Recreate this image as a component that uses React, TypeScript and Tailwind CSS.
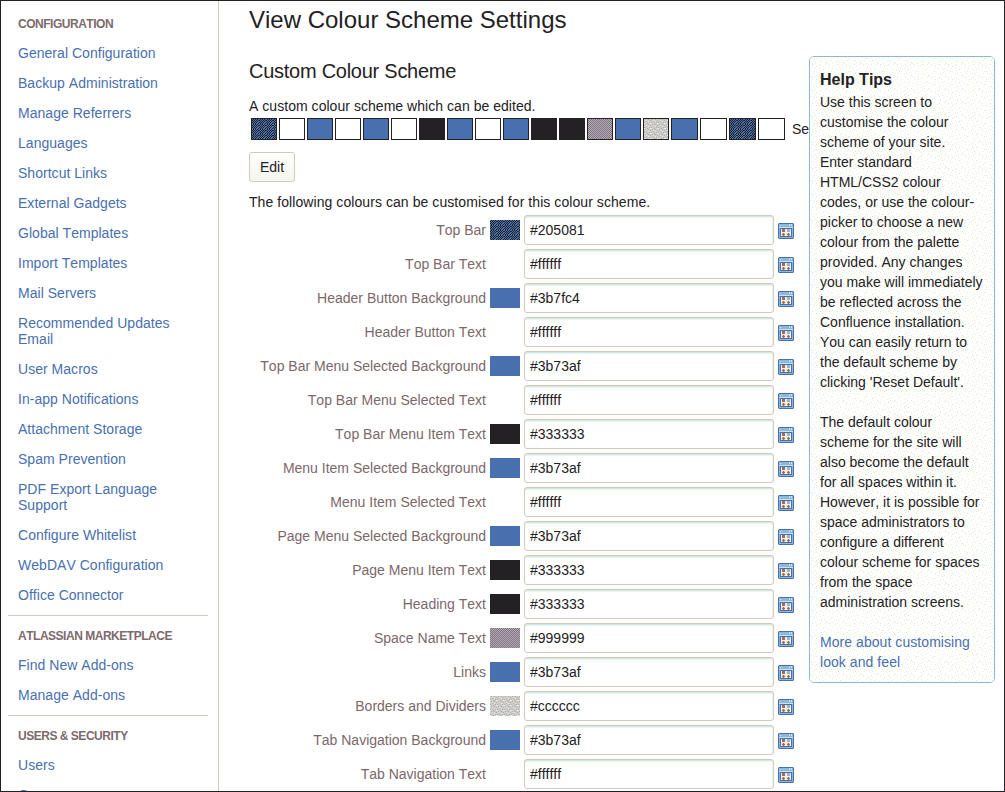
import React from "react";

type Tone = "navy" | "white" | "blue" | "black" | "grey" | "beige";

const configuration = [
  "General Configuration",
  "Backup Administration",
  "Manage Referrers",
  "Languages",
  "Shortcut Links",
  "External Gadgets",
  "Global Templates",
  "Import Templates",
  "Mail Servers",
  "Recommended Updates Email",
  "User Macros",
  "In-app Notifications",
  "Attachment Storage",
  "Spam Prevention",
  "PDF Export Language Support",
  "Configure Whitelist",
  "WebDAV Configuration",
  "Office Connector",
];

const preview: Tone[] = [
  "navy", "white", "blue", "white", "blue", "white", "black", "blue", "white", "blue",
  "black", "black", "grey", "blue", "beige", "blue", "white", "navy", "white",
];

const colours: [string, string, Tone][] = [
  ["Top Bar", "#205081", "navy"],
  ["Top Bar Text", "#ffffff", "white"],
  ["Header Button Background", "#3b7fc4", "blue"],
  ["Header Button Text", "#ffffff", "white"],
  ["Top Bar Menu Selected Background", "#3b73af", "blue"],
  ["Top Bar Menu Selected Text", "#ffffff", "white"],
  ["Top Bar Menu Item Text", "#333333", "black"],
  ["Menu Item Selected Background", "#3b73af", "blue"],
  ["Menu Item Selected Text", "#ffffff", "white"],
  ["Page Menu Selected Background", "#3b73af", "blue"],
  ["Page Menu Item Text", "#333333", "black"],
  ["Heading Text", "#333333", "black"],
  ["Space Name Text", "#999999", "grey"],
  ["Links", "#3b73af", "blue"],
  ["Borders and Dividers", "#cccccc", "beige"],
  ["Tab Navigation Background", "#3b73af", "blue"],
  ["Tab Navigation Text", "#ffffff", "white"],
];

function PatternDefs() {
  return (
    <svg className="absolute h-0 w-0" shapeRendering="crispEdges" aria-hidden="true">
      <defs>
        <pattern id="fill-navy" width="7" height="5" patternUnits="userSpaceOnUse">
          <rect width="7" height="5" fill="#4970ae" />
          <path
            d="M1 0h1v1H1zM3 0h1v1H3zM5 0h1v1H5zM0 1h1v1H0zM2 1h1v1H2zM4 1h1v1H4zM6 1h1v1H6zM1 2h1v1H1zM3 2h1v1H3zM5 2h1v1H5zM0 3h1v1H0zM2 3h1v1H2zM4 3h1v1H4zM1 4h1v1H1zM3 4h1v1H3zM6 4h1v1H6z"
            fill="#242124"
          />
        </pattern>
        <pattern id="fill-grey" width="2" height="2" patternUnits="userSpaceOnUse">
          <rect width="2" height="2" fill="#8eb6d9" />
          <path d="M1 0h1v1H1zM0 1h1v1H0z" fill="#a4685c" />
        </pattern>
        <pattern id="fill-beige" width="7" height="5" patternUnits="userSpaceOnUse">
          <rect width="7" height="5" fill="#d8cabc" />
          <path d="M1 0h1v1H1zM4 0h1v1H4zM6 1h1v1H6zM2 2h1v1H2zM5 3h1v1H5zM0 3h1v1H0zM3 4h1v1H3z" fill="#8eb6d9" />
          <path d="M2 1h1v1H2zM4 2h1v1H4zM0 4h1v1H0zM6 4h1v1H6z" fill="#e9ece2" />
        </pattern>
        <pattern id="fill-tips" width="17" height="13" patternUnits="userSpaceOnUse">
          <rect width="17" height="13" fill="#fffffd" />
          <path
            d="M1 0h1v1H1zM6 1h1v1H6zM10 0h1v1h-1zM14 2h1v1h-1zM3 3h1v1H3zM9 4h1v1H9zM12 5h1v1h-1zM0 6h1v1H0zM5 6h1v1H5zM15 7h1v1h-1zM8 8h1v1H8zM2 9h1v1H2zM12 9h1v1h-1zM5 11h1v1H5zM9 11h1v1H9zM15 11h1v1h-1z"
            fill="#f5efd8"
          />
          <path d="M4 1h1v1H4zM11 3h1v1h-1zM2 7h1v1H2zM10 7h1v1h-1zM16 5h1v1h-1zM13 12h1v1h-1zM6 9h1v1H6z" fill="#cbeaf6" />
        </pattern>
      </defs>
    </svg>
  );
}

const fills: Record<Tone, string> = {
  navy: "url(#fill-navy)",
  white: "#ffffff",
  blue: "#4970ae",
  black: "#242124",
  grey: "url(#fill-grey)",
  beige: "url(#fill-beige)",
};

function Swatch({ tone, className }: { tone: Tone; className: string }) {
  return (
    <svg className={className} shapeRendering="crispEdges">
      <rect width="100%" height="100%" fill={fills[tone]} />
    </svg>
  );
}

function NavSection({ title, items }: { title: string; items: string[] }) {
  return (
    <section className="px-[10px]">
      <h2 className="pt-2 pb-[6px] text-[12px] leading-4 font-bold tracking-[-0.48px] whitespace-nowrap text-[#7d6a6c]">{title}</h2>
      <ul>
        {items.map((item) => (
          <li key={item} className="py-[7px] pr-5 leading-4 tracking-[0.03px] text-[#4970ae]">
            <a>{item}</a>
          </li>
        ))}
      </ul>
    </section>
  );
}

function PickerIcon() {
  return (
    <svg width="16" height="16" viewBox="0 0 16 16" shapeRendering="crispEdges" className="block shrink-0">
      <rect width="16" height="16" fill="#4970ae" />
      <path d="M0 0h1v1H0zM15 0h1v1h-1zM0 15h1v1H0zM15 15h1v1h-1z" fill="#a9c3de" />
      <rect x="1" y="1" width="14" height="3" fill="#8eb6d9" />
      <path d="M2 2h1v1H2zM11 1h1v2h-1zM13 1h1v2h-1zM1 4h14v1H1z" fill="#c5e5f2" />
      <path d="M1 5h1v9H1zM14 5h1v9h-1zM1 14h14v1H1z" fill="#8eb6d9" />
      <rect x="3" y="6" width="10" height="7" fill="#f4f1df" />
      <path d="M4 6h3v3H4zM4 11h3v1H4zM5 10h1v3H5zM9 11h3v1H9zM10 10h1v3h-1z" fill="#a4685c" />
      <path d="M4 10h1v1H4zM6 10h1v1H6zM4 12h1v1H4zM6 12h1v1H6zM9 10h1v1H9zM11 10h1v1h-1zM9 12h1v1H9zM11 12h1v1h-1z" fill="#d6c8ba" />
      <path d="M9 6h3v3H9z" fill="#8eb6d9" />
    </svg>
  );
}

function ColourRow({ label, value, tone }: { label: string; value: string; tone: Tone }) {
  return (
    <div className="flex h-[30px] items-center">
      <label className="w-[237px] text-right whitespace-nowrap text-[#7b686b]">{label}</label>
      <Swatch tone={tone} className="ml-1 h-5 w-[30px]" />
      <input
        readOnly
        value={value}
        className="ml-1 h-[30px] w-[250px] rounded-[3px] border border-[#d6c8ba] bg-white px-[5px] text-[#242124] shadow-[inset_0_1px_0_#c5ebf6,inset_0_2px_0_#f5f3e2,inset_-1px_0_0_#eef6f2] outline-none"
      />
      <span className="mt-[2px] ml-1">
        <PickerIcon />
      </span>
    </div>
  );
}

export default function App() {
  return (
    <div className="relative flex h-[792px] w-[1005px] overflow-hidden border border-[#242124] bg-white font-['Liberation_Sans',Arial,sans-serif] text-[14px] text-[#242124] [font-kerning:none]">
      <PatternDefs />
      <nav className="w-[218px] shrink-0 border-r border-[#d6c8ba] pt-[7px] pr-[10px] pl-[7px]">
        <NavSection title="CONFIGURATION" items={configuration} />
        <hr className="mt-[5px] mb-1 border-[#d6c8ba]" />
        <NavSection title="ATLASSIAN MARKETPLACE" items={["Find New Add-ons", "Manage Add-ons"]} />
        <hr className="mt-[5px] mb-1 border-[#d6c8ba]" />
        <NavSection title={"USERS & SECURITY"} items={["Users", "Groups"]} />
      </nav>

      <main className="w-[590px] shrink-0 overflow-hidden pl-[30px]">
        <h1 className="mt-1 h-[30px] text-[24px] leading-[30px] whitespace-nowrap">View Colour Scheme Settings</h1>
        <h2 className="mt-6 h-6 text-[20px] leading-6 tracking-[-0.26px] whitespace-nowrap">Custom Colour Scheme</h2>
        <p className="mt-[13px] h-5 leading-5 tracking-[0.04px]">A custom colour scheme which can be edited.</p>
        <div className="mt-[2px] ml-[2px] flex h-[22px] items-center gap-[2px]">
          {preview.map((tone, i) => (
            <Swatch
              key={i}
              tone={tone}
              className={`h-[22px] shrink-0 border border-[#242124] ${i < 15 ? "w-[26px]" : "w-[27px]"}`}
            />
          ))}
          <span className="ml-[5px] whitespace-nowrap">Select</span>
        </div>
        <button className="mt-3 block h-[30px] w-[46px] rounded-[3px] border border-[#d6c8ba] bg-linear-to-b from-white to-[#f4f6ee]">
          Edit
        </button>
        <p className="mt-[10px] mb-[3px] h-5 leading-5 tracking-[0.07px]">The following colours can be customised for this colour scheme.</p>
        <div className="flex flex-col gap-1">
          {colours.map(([label, value, tone]) => (
            <ColourRow key={label} label={label} value={value} tone={tone} />
          ))}
        </div>
      </main>

      <aside className="relative mt-[55px] h-[627px] w-[186px] shrink-0 overflow-hidden rounded-[5px] border border-[#8eb6d9] bg-white px-[10px] pt-[13px] leading-5">
        <svg className="absolute inset-0 h-full w-full" shapeRendering="crispEdges" aria-hidden="true">
          <rect width="100%" height="100%" fill="url(#fill-tips)" />
        </svg>
        <div className="relative">
          <h3 className="mb-[2px] text-[16px] leading-5 font-bold">Help Tips</h3>
          <p className="whitespace-pre">
            {"Use this screen to\ncustomise the colour\nscheme of your site.\nEnter standard\nHTML/CSS2 colour\ncodes, or use the colour-\npicker to choose a new\ncolour from the palette\nprovided. Any changes\nyou make will immediately\nbe reflected across the\nConfluence installation.\nYou can easily return to\nthe default scheme by\nclicking 'Reset Default'."}
          </p>
          <p className="mt-5 whitespace-pre">
            {"The default colour\nscheme for the site will\nalso become the default\nfor all spaces within it.\nHowever, it is possible for\nspace administrators to\nconfigure a different\ncolour scheme for spaces\nfrom the space\nadministration screens."}
          </p>
          <a className="mt-5 block tracking-[0.06px] whitespace-pre text-[#4970ae]">{"More about customising\nlook and feel"}</a>
        </div>
      </aside>
    </div>
  );
}
